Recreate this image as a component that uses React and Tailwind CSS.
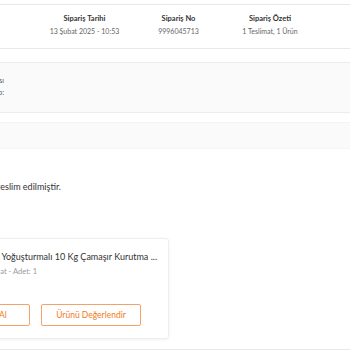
import React from 'react'

const SUMMARY = [
  { title: 'Sipariş Tarihi', value: '13 Şubat 2025 - 10:53', cls: 'ml-0 w-[89px]' },
  { title: 'Sipariş No', value: '9996045713', cls: 'ml-[4px] w-[91px]' },
  { title: 'Sipariş Özeti', value: '1 Teslimat, 1 Ürün', cls: 'ml-[2px] w-[88px]' },
]

export default function App() {
  return (
    <div className="h-[350px] w-[350px] overflow-hidden bg-white font-['Lato','Noto_Sans',sans-serif] text-[#333]">
      <div className="-mx-[20px] pt-[4px]">
        {/* Order header */}
        <div className="flex h-[45px] border border-[#e8e8e8] pl-[59px] pt-[8px]">
          {SUMMARY.map((s) => (
            <div key={s.title} className={`${s.cls} flex flex-col items-center whitespace-nowrap`}>
              <span className="text-[7.5px] font-bold leading-[12px] text-[#333]">{s.title}</span>
              <span className="text-[7px] leading-[12px] text-[#666]">{s.value}</span>
            </div>
          ))}
        </div>

        {/* Delivery info */}
        <div className="mt-[13px] h-[51px] border border-[#ececec] bg-[#fafafa] pt-[11px]">
          <div className="-ml-[57px] flex w-[80px] flex-col items-end whitespace-nowrap text-[7px] leading-[12px] text-[#555]">
            <span>Kargo Firması</span>
            <span>Takip No:</span>
          </div>
        </div>

        <div className="mt-[9px] h-[27px] border border-[#f4f4f4] bg-[#fafafa]" />
      </div>

      <div className="-ml-[139px] mt-[32px] flex w-[200px] justify-end whitespace-nowrap text-[9px] leading-[12px] text-[#333]">
        Ürününüz teslim edilmiştir.
      </div>

      {/* Product card */}
      <div className="-ml-[100px] mt-[45px] w-[269px] rounded-[3px] border border-[#eeeeee] pb-[12px] pl-[16px] pr-[11px] pt-[12px] shadow-[0_1px_3px_rgba(0,0,0,0.06)]">
        <div className="flex justify-end whitespace-nowrap text-[9px] leading-[12px] text-[#333]">
          Pompalı Yoğuşturmalı 10 Kg Çamaşır Kurutma ...
        </div>
        <div className="mt-[3px] flex justify-end whitespace-nowrap pr-[120px] text-[7.5px] leading-[12px] text-[#9a9a9a]">
          Teslimat - Adet: 1
        </div>
        <div className="mt-[26px] flex gap-[11px] pl-[13px]">
          <button className="flex h-[22px] w-[100px] items-center justify-center rounded-[2px] border border-[#f3a26a] text-[8.5px] text-[#f27a1a]">
            Tekrar Satın Al
          </button>
          <button className="flex h-[22px] w-[100px] items-center justify-center rounded-[2px] border border-[#f3a26a] text-[8.5px] text-[#f27a1a]">
            Ürünü Değerlendir
          </button>
        </div>
      </div>

      <div className="mt-[10px] border-t border-[#e8e8e8]" />
    </div>
  )
}
